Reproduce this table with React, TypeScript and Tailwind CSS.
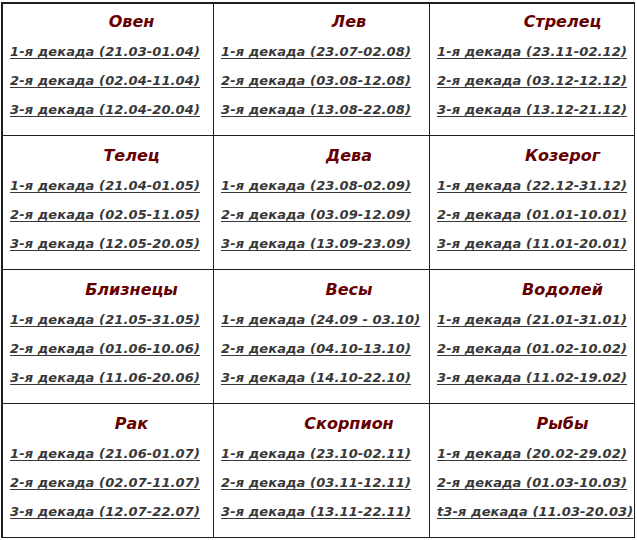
const signs = [
  {
    name: "Овен",
    pad: "pl-[40px]",
    dec: ["1-я декада (21.03-01.04)", "2-я декада (02.04-11.04)", "3-я декада (12.04-20.04)"]
  },
  {
    name: "Лев",
    pad: "pl-[48px]",
    dec: ["1-я декада (23.07-02.08)", "2-я декада (03.08-12.08)", "3-я декада (13.08-22.08)"]
  },
  {
    name: "Стрелец",
    pad: "pl-[54px]",
    dec: ["1-я декада (23.11-02.12)", "2-я декада (03.12-12.12)", "3-я декада (13.12-21.12)"]
  },
  {
    name: "Телец",
    pad: "pl-[40px]",
    dec: ["1-я декада (21.04-01.05)", "2-я декада (02.05-11.05)", "3-я декада (12.05-20.05)"]
  },
  {
    name: "Дева",
    pad: "pl-[48px]",
    dec: ["1-я декада (23.08-02.09)", "2-я декада (03.09-12.09)", "3-я декада (13.09-23.09)"]
  },
  {
    name: "Козерог",
    pad: "pl-[54px]",
    dec: ["1-я декада (22.12-31.12)", "2-я декада (01.01-10.01)", "3-я декада (11.01-20.01)"]
  },
  {
    name: "Близнецы",
    pad: "pl-[40px]",
    dec: ["1-я декада (21.05-31.05)", "2-я декада (01.06-10.06)", "3-я декада (11.06-20.06)"]
  },
  {
    name: "Весы",
    pad: "pl-[48px]",
    dec: ["1-я декада (24.09 - 03.10)", "2-я декада (04.10-13.10)", "3-я декада (14.10-22.10)"]
  },
  {
    name: "Водолей",
    pad: "pl-[54px]",
    dec: ["1-я декада (21.01-31.01)", "2-я декада (01.02-10.02)", "3-я декада (11.02-19.02)"]
  },
  {
    name: "Рак",
    pad: "pl-[40px]",
    dec: ["1-я декада (21.06-01.07)", "2-я декада (02.07-11.07)", "3-я декада (12.07-22.07)"]
  },
  {
    name: "Скорпион",
    pad: "pl-[48px]",
    dec: ["1-я декада (23.10-02.11)", "2-я декада (03.11-12.11)", "3-я декада (13.11-22.11)"]
  },
  {
    name: "Рыбы",
    pad: "pl-[54px]",
    dec: ["1-я декада (20.02-29.02)", "2-я декада (01.03-10.03)", "t3-я декада (11.03-20.03)"]
  }
]

const Cell = ({ sign, first }: { sign: (typeof signs)[number]; first: boolean }) => (
  <div
    className={`overflow-hidden whitespace-nowrap border-r border-b border-[#1e1e1e] pl-[7px] ${
      first ? "h-[132px] pt-[1px]" : "h-[134px] pt-[3px]"
    }`}
  >
    <div
      className={`${sign.pad} pt-[2px] text-center text-[16px] leading-[30px] font-bold italic text-[#660000]`}
    >
      {sign.name}
    </div>
    {sign.dec.map((d) => (
      <div key={d} className="text-[13px] leading-[29px] tracking-[0.1px]">
        <a
          href="#"
          className="font-bold italic text-[#383838] underline underline-offset-2"
        >
          {d}
        </a>
      </div>
    ))}
  </div>
)

export default function App() {
  return (
    <div
      className="min-h-[540px] bg-white pt-[2px] pl-[1px]"
      style={{ fontFamily: '"DejaVu Sans", Verdana, sans-serif' }}
    >
      <div className="grid w-[634px] grid-cols-[211px_216px_205px] border-t-2 border-l-2 border-[#1e1e1e]">
        {signs.map((s, i) => (
          <Cell key={s.name} sign={s} first={i < 3} />
        ))}
      </div>
    </div>
  )
}
